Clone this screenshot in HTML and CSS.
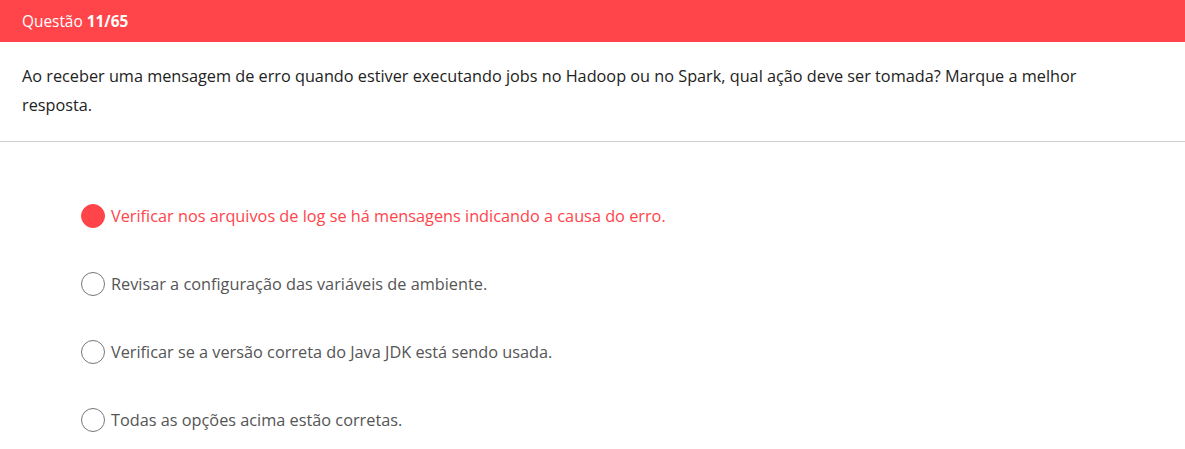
FILE: index.html
```html
<!DOCTYPE html>
<html lang="pt">
<head>
<meta charset="utf-8">
<link rel="stylesheet" href="styles.css">
</head>
<body>
<header class="topbar">Questão <b>11/65</b></header>
<section class="question">
  <p>Ao receber uma mensagem de erro quando estiver executando jobs no Hadoop ou no Spark, qual ação deve ser tomada? Marque a melhor resposta.</p>
</section>
<ul class="options">
  <li class="option selected"><span class="radio"></span><span class="label">Verificar nos arquivos de log se há mensagens indicando a causa do erro.</span></li>
  <li class="option"><span class="radio"></span><span class="label">Revisar a configuração das variáveis de ambiente.</span></li>
  <li class="option"><span class="radio"></span><span class="label">Verificar se a versão correta do Java JDK está sendo usada.</span></li>
  <li class="option"><span class="radio"></span><span class="label">Todas as opções acima estão corretas.</span></li>
</ul>
</body>
</html>
```

FILE: styles.css
```css
* { box-sizing: border-box; }
html, body { margin: 0; padding: 0; background: #fff; }
body { font-family: "Open Sans", "Noto Sans", sans-serif; color: #222; }
.topbar {
  height: 42px;
  background: #ff444a;
  color: #fff;
  font-size: 15.4px;
  display: flex;
  align-items: center;
  gap: 4px;
  padding-left: 22px;
}
.topbar b { font-weight: 700; }
.question {
  padding: 20px 22px 21px;
  border-bottom: 1px solid #cfcfcf;
}
.question p {
  margin: 0;
  font-size: 16.25px;
  line-height: 29px;
  color: #222;
  max-width: 1100px;
}
.options {
  list-style: none;
  margin: 0;
  padding: 62px 0 0 81px;
  display: flex;
  flex-direction: column;
  gap: 44px;
}
.option {
  display: flex;
  align-items: center;
  gap: 6px;
  height: 24px;
  font-size: 16.3px;
  color: #555;
}
.radio {
  width: 24px;
  height: 24px;
  border-radius: 50%;
  border: 1.5px solid #777;
  flex: none;
}
.selected { color: #ff444a; }
.selected .radio { background: #ff444a; border-color: #ff444a; }
```
